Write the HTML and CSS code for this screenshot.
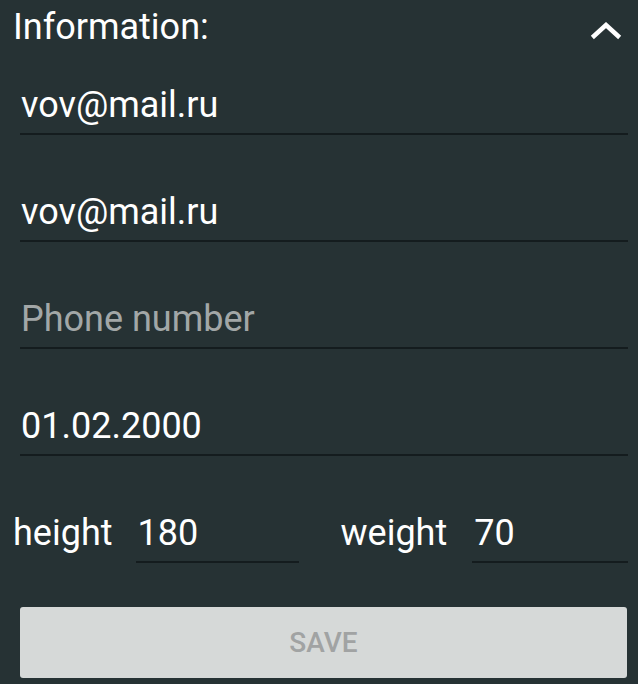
FILE: index.html
```html
<!DOCTYPE html>
<html>
<head>
<meta charset="utf-8">
<link rel="stylesheet" href="styles.css">
</head>
<body>
<div class="panel">
  <div class="header">
    <span class="title">Information:</span>
    <svg class="chev" width="32" height="20" viewBox="0 0 32 20"><path d="M4 14 L16 3 L28 14" fill="none" stroke="#fff" stroke-width="4.5" stroke-linecap="square"/></svg>
  </div>
  <div class="field first"><span class="value">vov@mail.ru</span></div>
  <div class="field"><span class="value">vov@mail.ru</span></div>
  <div class="field"><span class="value placeholder">Phone number</span></div>
  <div class="field"><span class="value">01.02.2000</span></div>
  <div class="row">
    <span class="label">height</span>
    <div class="small h"><span class="value">180</span></div>
    <span class="label w">weight</span>
    <div class="small wt"><span class="value">70</span></div>
  </div>
  <div class="btn">SAVE</div>
</div>
</body>
</html>
```
FILE: styles.css
```css
html, body {
  margin: 0;
  padding: 0;
  background: #263234;
}
.panel {
  width: 638px;
  height: 684px;
  font-family: Roboto, "Noto Sans", sans-serif;
  color: #ffffff;
  font-size: 36px;
  line-height: 40px;
  overflow: hidden;
}
.header {
  display: flex;
  align-items: flex-start;
  justify-content: space-between;
  padding: 7px 0 0 13px;
  height: 41px;
}
.chev {
  margin-right: 16px;
  margin-top: 15px;
}
.field {
  margin: 57px 10px 0 20px;
  padding: 0 0 8px 1px;
  border-bottom: 2px solid #141c1e;
}
.field.first {
  margin-top: 37px;
}
.value {
  display: block;
  height: 40px;
  white-space: nowrap;
}
.placeholder {
  color: #a2a7a7;
}
.row {
  display: flex;
  align-items: flex-end;
  margin: 57px 0 0 13px;
}
.label {
  padding-bottom: 10px;
}
.small {
  padding: 0 0 8px 2px;
  border-bottom: 2px solid #141c1e;
}
.small.h {
  margin-left: 23px;
  width: 161px;
}
.label.w {
  margin-left: 42px;
}
.small.wt {
  margin-left: 25px;
  width: 154px;
}
.btn {
  margin: 44px 11px 0 20px;
  height: 71px;
  border-radius: 3px;
  background: #d6d9d8;
  color: #a1a3a3;
  font-weight: 500;
  font-size: 28px;
  display: flex;
  align-items: center;
  justify-content: center;
}
```
